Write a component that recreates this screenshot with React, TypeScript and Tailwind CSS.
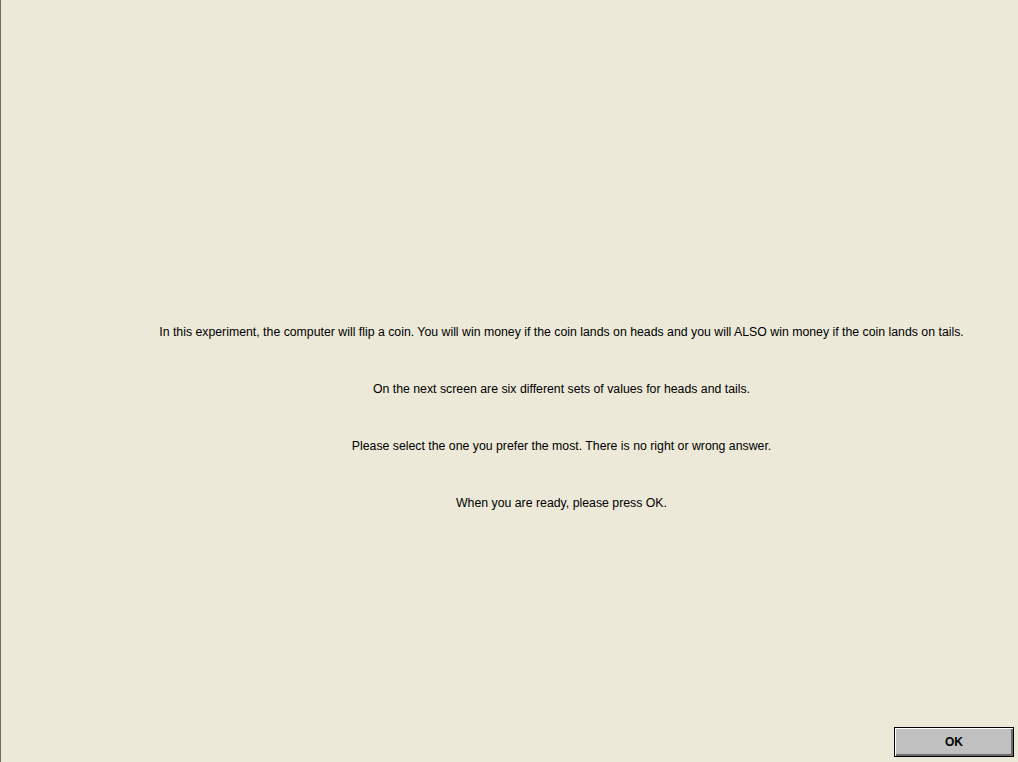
export default function App() {
  const lines = [
    "In this experiment, the computer will flip a coin. You will win money if the coin lands on heads and you will ALSO win money if the coin lands on tails.",
    "On the next screen are six different sets of values for heads and tails.",
    "Please select the one you prefer the most. There is no right or wrong answer.",
    "When you are ready, please press OK.",
  ];

  return (
    <div
      className="flex h-[762px] w-[1018px] flex-col overflow-hidden border-l border-[#6f6d62] bg-[#ECE9D8] text-black"
      style={{ fontFamily: '"Liberation Sans", Arial, sans-serif' }}
    >
      {/* message */}
      <div className="flex flex-1 flex-col items-center gap-[43px] pl-[104px] pt-[325px]">
        {lines.map((line, i) => (
          <p key={i} className="whitespace-nowrap text-[12.3px] leading-[14px]">
            {line}
          </p>
        ))}
      </div>

      {/* buttons */}
      <div className="flex justify-end pb-[5px] pr-[4px]">
        <button className="h-[30px] w-[120px] border border-black bg-[#c0c0c0] text-[12px] font-bold shadow-[inset_1px_1px_0_#ffffff,inset_-2px_-2px_0_#6b6b6b]">
          OK
        </button>
      </div>
    </div>
  );
}
